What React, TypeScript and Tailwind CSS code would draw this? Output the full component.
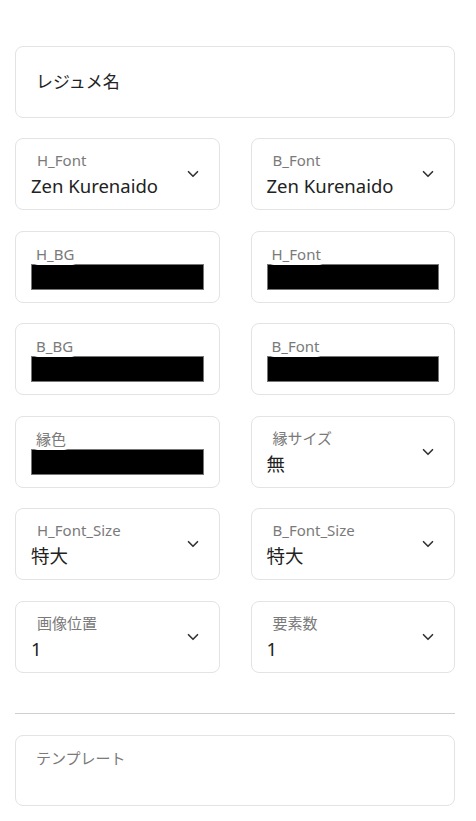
import { ChevronDown } from "lucide-react"

const font = { fontFamily: '"Noto Sans", "Noto Sans CJK JP", sans-serif' }

function SelectBox({ label, value }: { label: string; value: string }) {
  return (
    <div className="relative flex h-[72px] items-center rounded-lg border border-[#e3e3e3] bg-white pl-[15px] pr-[17px]">
      <div className="flex flex-1 flex-col">
        <span className="pl-1.5 text-[15px] leading-[20px] text-[#7a7a7a]">{label}</span>
        <span className="mt-[4px] text-[18.5px] leading-[24px] text-[#222]">{value}</span>
      </div>
      <ChevronDown className="h-[18px] w-[18px] text-[#333]" strokeWidth={2.2} />
    </div>
  )
}

function ColorBox({ label }: { label: string }) {
  return (
    <div className="relative h-[72px] rounded-lg border border-[#e3e3e3] bg-white px-[15px] pt-[32px]">
      <div className="h-[26px] w-full border border-[#767676] bg-black" />
      {/* notched label over the swatch */}
      <span className="absolute left-[16px] top-[11px] rounded-b-md bg-white px-1 text-[15px] leading-[22px] text-[#7a7a7a]">
        {label}
      </span>
    </div>
  )
}

export default function App() {
  return (
    <div className="min-h-screen bg-white pl-[15px] pr-[21px] pt-[46px]" style={font}>
      <div className="flex h-[72px] items-center rounded-lg border border-[#e3e3e3] px-5">
        <span className="text-[17px] text-[#222]">レジュメ名</span>
      </div>

      <div className="mt-[20px] grid grid-cols-2 gap-x-[31px] gap-y-[20.6px]">
        <SelectBox label="H_Font" value="Zen Kurenaido" />
        <SelectBox label="B_Font" value="Zen Kurenaido" />
        <ColorBox label="H_BG" />
        <ColorBox label="H_Font" />
        <ColorBox label="B_BG" />
        <ColorBox label="B_Font" />
        <ColorBox label="縁色" />
        <SelectBox label="縁サイズ" value="無" />
        <SelectBox label="H_Font_Size" value="特大" />
        <SelectBox label="B_Font_Size" value="特大" />
        <SelectBox label="画像位置" value="1" />
        <SelectBox label="要素数" value="1" />
      </div>

      <hr className="mt-[40px] border-t border-[#cfcfcf]" />

      <div className="mt-[21px] h-[71px] rounded-lg border border-[#e3e3e3] px-[15px] pt-[10px]">
        <span className="pl-[5px] text-[15px] leading-[22px] text-[#7a7a7a]">テンプレート</span>
      </div>
    </div>
  )
}
